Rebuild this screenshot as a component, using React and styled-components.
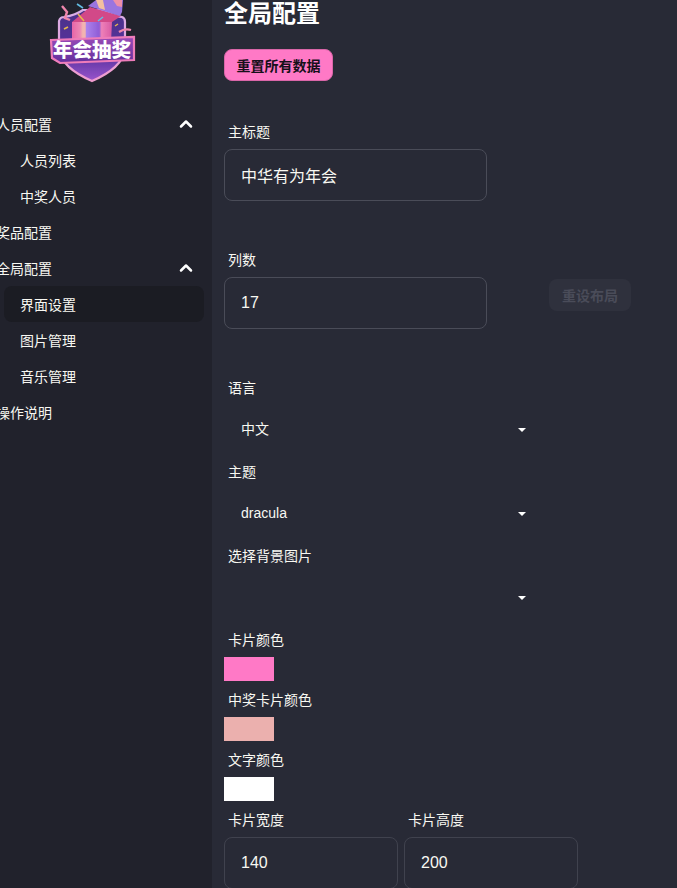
import React from "react";
import styled, { createGlobalStyle } from "styled-components";
import { ChevronUp } from "lucide-react";

const GlobalStyle = createGlobalStyle`
  html, body {
    margin: 0;
    height: 100%;
    overflow: hidden;
    background: #282a36;
    font-family: "Liberation Sans", "Noto Sans CJK SC", sans-serif;
    color: #f8f8f2;
  }
  * {
    box-sizing: border-box;
  }
`;

const Logo = () => (
  <LogoSvg viewBox="48 0 90 84" aria-label="logo">
    <defs>
      <linearGradient id="shield" x1="0" y1="0" x2="0" y2="1">
        <stop offset="0" stopColor="#4a3388" />
        <stop offset="0.65" stopColor="#5a33a0" />
        <stop offset="1" stopColor="#9a55cc" />
      </linearGradient>
      <linearGradient id="edge" x1="0" y1="0" x2="0" y2="1">
        <stop offset="0" stopColor="#d8aee8" />
        <stop offset="1" stopColor="#f09ccf" />
      </linearGradient>
      <linearGradient id="box" x1="0" y1="0" x2="1" y2="0">
        <stop offset="0" stopColor="#e865a8" />
        <stop offset="0.2" stopColor="#ee86b4" />
        <stop offset="0.27" stopColor="#f3b4b0" />
        <stop offset="0.33" stopColor="#f3b4b0" />
        <stop offset="0.36" stopColor="#ac82ec" />
        <stop offset="0.68" stopColor="#8f5cd6" />
        <stop offset="0.74" stopColor="#ee80b8" />
        <stop offset="1" stopColor="#d85aa4" />
      </linearGradient>
      <linearGradient id="banner" x1="0" y1="0" x2="0" y2="1">
        <stop offset="0" stopColor="#9a4ab8" />
        <stop offset="1" stopColor="#63309c" />
      </linearGradient>
      <filter id="soft">
        <feGaussianBlur stdDeviation="0.35" />
      </filter>
    </defs>
    <g filter="url(#soft)">
      <path
        d="M59 21 Q60 17 64 17 Q76 15 83 10 L104 10 Q112 16 122 17 Q125 18 125 22 L125 50 Q122 68 92 81 Q62 68 59 50 Z"
        fill="url(#shield)"
        stroke="url(#edge)"
        strokeWidth="2.2"
      />
      <path d="M72 22 L90 7 L121 16 L112 22 Z" fill="#d24a88" />
      <path d="M72 22 L112 22 L111 42 L72 42 Z" fill="url(#box)" />
      <path d="M88 6 L96 0 L123 0 L122 12 L120 16 Z" fill="#9a74e0" />
      <path d="M96 0 L103 0 L105 10 L99 8 Z" fill="#f3c0a0" />
      <path d="M113 0 L122 0 L122 7 L117 6 Z" fill="#ee8fa8" />
      <path d="M62 6 L67 12 L65 18 L70 20" fill="none" stroke="#ee86ac" strokeWidth="2.4" />
      <path d="M77 4 L83 8" stroke="#62bde4" strokeWidth="1.6" />
      <path d="M78 14 L84 21" stroke="#e7b84e" strokeWidth="1.6" />
      <path d="M98 21 L103 17" stroke="#62bde4" strokeWidth="1.6" />
      <path d="M119 32 Q125 28 131 30" fill="none" stroke="#ee86ac" strokeWidth="2.2" />
      <path d="M64 29 L68 27" stroke="#e7b84e" strokeWidth="1.6" />
      <path d="M115 26 L118 24" stroke="#e7b84e" strokeWidth="1.4" />
      <path
        d="M51 40 L134 37 L134 60 L60 63 L52 58 Z"
        fill="url(#banner)"
        stroke="#ee7cba"
        strokeWidth="2.2"
      />
    </g>
    <BannerText x="92" y="57" textLength="78" lengthAdjust="spacingAndGlyphs">
      年会抽奖
    </BannerText>
  </LogoSvg>
);

const App = () => {
  return (
    <Page>
      <GlobalStyle />
      <Sidebar>
        <Logo />
        <Menu>
          <MenuItem>
            人员配置
            <Caret><ChevronUp size={20} strokeWidth={3} /></Caret>
          </MenuItem>
          <SubItem>人员列表</SubItem>
          <SubItem>中奖人员</SubItem>
          <MenuItem>奖品配置</MenuItem>
          <MenuItem>
            全局配置
            <Caret><ChevronUp size={20} strokeWidth={3} /></Caret>
          </MenuItem>
          <SubItem $active>界面设置</SubItem>
          <SubItem>图片管理</SubItem>
          <SubItem>音乐管理</SubItem>
          <MenuItem>操作说明</MenuItem>
        </Menu>
      </Sidebar>

      <Main>
        <Title>全局配置</Title>
        <ResetAll>重置所有数据</ResetAll>

        <Label>主标题</Label>
        <TextInput defaultValue="中华有为年会" />

        <Label $spaced>列数</Label>
        <InputRow>
          <TextInput defaultValue="17" />
          <LayoutButton disabled>重设布局</LayoutButton>
        </InputRow>

        <Label $spaced>语言</Label>
        <SelectWrap>
          <Select defaultValue="zh">
            <option value="zh">中文</option>
            <option value="en">English</option>
          </Select>
        </SelectWrap>

        <Label>主题</Label>
        <SelectWrap>
          <Select defaultValue="dracula">
            <option value="dracula">dracula</option>
          </Select>
        </SelectWrap>

        <Label>选择背景图片</Label>
        <SelectWrap>
          <Select defaultValue="">
            <option value=""></option>
          </Select>
        </SelectWrap>

        <Label>卡片颜色</Label>
        <Swatch $color="#ff79c6" />
        <Label>中奖卡片颜色</Label>
        <Swatch $color="#ebb0ae" />
        <Label>文字颜色</Label>
        <Swatch $color="#ffffff" />

        <SizeRow>
          <SizeField>
            <Label>卡片宽度</Label>
            <TextInput $small defaultValue="140" />
          </SizeField>
          <SizeField>
            <Label>卡片高度</Label>
            <TextInput $small defaultValue="200" />
          </SizeField>
        </SizeRow>
      </Main>
    </Page>
  );
};

export default App;

const Page = styled.div`
  display: flex;
  width: 677px;
  height: 888px;
  overflow: hidden;
`;

const Sidebar = styled.aside`
  flex: 0 0 212px;
  height: 100%;
  background: #21222c;
  overflow: hidden;
`;

const LogoSvg = styled.svg`
  display: block;
  width: 90px;
  height: 84px;
  margin-left: 48px;
`;

const BannerText = styled.text`
  font-family: "Noto Sans CJK SC", sans-serif;
  font-size: 19px;
  font-weight: 900;
  fill: #ffffff;
  text-anchor: middle;
`;

const Menu = styled.nav`
  display: flex;
  flex-direction: column;
  width: 224px;
  margin: 22px 0 0 -20px;
  font-size: 14px;
`;

const MenuItem = styled.div`
  display: flex;
  align-items: center;
  justify-content: space-between;
  height: 36px;
  padding: 0 8px 0 16px;
`;

const Caret = styled.span`
  display: flex;
  color: #ffffff;
`;

const SubItem = styled.div`
  display: flex;
  align-items: center;
  height: 36px;
  margin-left: 24px;
  padding: 0 16px;
  border-radius: 8px;
  background: ${(props) => (props.$active ? "#1b1c23" : "transparent")};
`;

const Main = styled.main`
  flex: 1;
  min-width: 0;
  margin-top: -3px;
  padding-left: 12px;
`;

const Title = styled.h1`
  margin: 0 0 19px;
  padding-top: 1px;
  font-size: 24px;
  line-height: 32px;
  font-weight: 700;
  color: #ffffff;
`;

const ResetAll = styled.button`
  display: block;
  width: 109px;
  height: 32px;
  padding: 0;
  border: 1px solid #d966a8;
  border-radius: 8px;
  background: #ff79c6;
  color: #16101a;
  font-family: inherit;
  font-size: 14px;
  font-weight: 600;
`;

const Label = styled.label`
  display: block;
  height: 36px;
  margin-top: ${(props) => (props.$spaced ? "40px" : "0")};
  padding: 9px 4px 7px;
  font-size: 14px;
  line-height: 20px;
  color: #f8f8f2;

  ${ResetAll} + & {
    margin-top: 32px;
  }
`;

const TextInput = styled.input`
  display: block;
  width: ${(props) => (props.$small ? "174px" : "263px")};
  height: 52px;
  padding: 0 16px;
  border: 1px solid ${(props) => (props.$small ? "#40424e" : "#4a4c58")};
  border-radius: 8px;
  background: transparent;
  color: #f8f8f2;
  font-family: inherit;
  font-size: 16px;
  outline: none;
`;

const InputRow = styled.div`
  display: flex;
  align-items: flex-start;
`;

const LayoutButton = styled.button`
  height: 32px;
  margin: 2px 0 0 62px;
  padding: 0 13px;
  border: none;
  border-radius: 8px;
  background: #2f313d;
  color: #4a4c59;
  font-family: inherit;
  font-size: 14px;
  font-weight: 600;
`;

const SelectWrap = styled.div`
  position: relative;
  width: 320px;
  height: 48px;

  &::after {
    content: "";
    position: absolute;
    left: 294px;
    top: 23px;
    border-left: 4px solid transparent;
    border-right: 4px solid transparent;
    border-top: 4px solid #ffffff;
    pointer-events: none;
  }
`;

const Select = styled.select`
  appearance: none;
  display: block;
  width: 100%;
  height: 100%;
  padding: 0 16px;
  border: 1px solid transparent;
  background: transparent;
  color: #f8f8f2;
  font-family: inherit;
  font-size: 14px;
  outline: none;
`;

const Swatch = styled.div`
  width: 50px;
  height: 24px;
  background: ${(props) => props.$color};
`;

const SizeRow = styled.div`
  display: flex;
  gap: 6px;
`;

const SizeField = styled.div`
  width: 174px;
`;
